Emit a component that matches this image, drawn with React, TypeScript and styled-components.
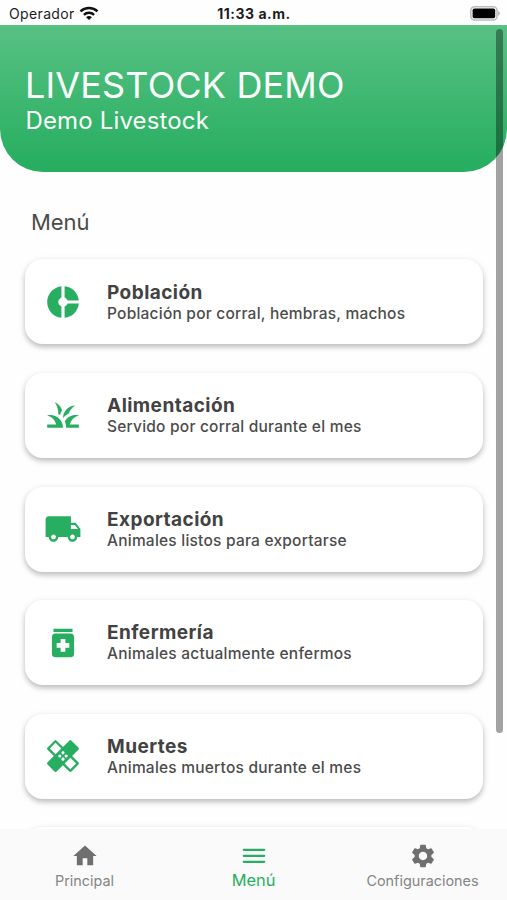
import React from "react";
import styled, { createGlobalStyle, css } from "styled-components";
import type { IconType } from "react-icons";
import {
  MdDonutSmall,
  MdGrass,
  MdHealing,
  MdHome,
  MdLocalShipping,
  MdMedication,
  MdSettings,
} from "react-icons/md";

const GlobalStyle = createGlobalStyle`
  * { box-sizing: border-box; }
  body {
    margin: 0;
    background: #fefefe;
    font-family: Inter, Roboto, sans-serif;
  }
  h1, h2, h3, p { margin: 0; font-weight: 400; }
`;

const Screen = styled.div`
  position: relative;
  display: flex;
  flex-direction: column;
  width: 507px;
  height: 900px;
  overflow: hidden;
  background: #fefefe;
`;

const StatusBar = styled.div`
  flex: none;
  display: grid;
  grid-template-columns: 1fr auto 1fr;
  align-items: center;
  height: 25px;
  padding: 3px 7px 0 9px;
  color: #1c1c1e;
  font-size: 14px;
  line-height: 20px;
`;

const Carrier = styled.div`
  display: flex;
  align-items: center;
  gap: 4px;
  letter-spacing: 0.36px;

  svg { margin-bottom: 2px; }
`;

const Clock = styled.div`
  margin-right: 1px;
  font-weight: 700;
  letter-spacing: 0.5px;
`;

const BatterySlot = styled.div`
  display: flex;
  justify-content: flex-end;
  padding-bottom: 2px;
`;

const Header = styled.header`
  flex: none;
  height: 147px;
  padding: 37px 26px 0;
  color: #fafffb;
  background: linear-gradient(180deg, #58c184 0%, #27ae60 96%);
  border-radius: 0 0 43px 43px;
`;

const Title = styled.h1`
  margin-left: -1px;
  font-size: 36px;
  line-height: 46px;
  letter-spacing: 0.15px;
`;

const Subtitle = styled.p`
  margin-top: -1px;
  margin-left: -0.5px;
  font-size: 24px;
  line-height: 28px;
  letter-spacing: 0.15px;
`;

const Content = styled.main`
  flex: 1;
  min-height: 0;
  overflow: hidden;
  padding: 34px 25px 0;
`;

const SectionTitle = styled.h2`
  height: 53.4px;
  padding-left: 6px;
  color: #4b4b4b;
  font-size: 22px;
  line-height: 32px;
  letter-spacing: -0.1px;
`;

const CardList = styled.div`
  display: flex;
  flex-direction: column;
  gap: 28.6px;
`;

const Card = styled.article`
  flex: none;
  display: flex;
  align-items: center;
  gap: 25px;
  width: 458px;
  height: 85px;
  padding: 0 20px 0 19px;
  border-radius: 18px;
  background: #fff;
  box-shadow: 0 3px 5px rgba(0, 0, 0, 0.2), 0 2px 8px rgba(0, 0, 0, 0.09);
`;

const CardIcon = styled.div`
  display: flex;
  color: #27ae60;
`;

const CardCopy = styled.div`
  padding-top: 1.4px;
`;

const CardTitle = styled.h3`
  color: #424242;
  font-size: 19px;
  font-weight: 650;
  line-height: 21px;
  letter-spacing: 0.45px;
`;

const CardText = styled.p`
  color: #4c4c4c;
  font-size: 15.5px;
  font-weight: 450;
  line-height: 21px;
  letter-spacing: 0.22px;
`;

const TabBar = styled.nav`
  flex: none;
  display: grid;
  grid-template-columns: repeat(3, 1fr);
  height: 71px;
  background: #fafafa;
`;

const Tab = styled.div<{ $active?: boolean }>`
  display: flex;
  flex-direction: column;
  align-items: center;
  padding-top: 13px;
  color: #6f6f6f;
  ${(p) => p.$active && css`color: #27ae60;`}
`;

const TabLabel = styled.span<{ $active?: boolean }>`
  color: ${(p) => (p.$active ? "#27ae60" : "#858585")};
  font-size: ${(p) => (p.$active ? "16.4px" : "14.4px")};
  line-height: ${(p) => (p.$active ? "20px" : "22px")};
  white-space: nowrap;
`;

const ScrollThumb = styled.div`
  position: absolute;
  top: 29px;
  right: 4px;
  width: 7px;
  height: 704px;
  border-radius: 4px;
  background: rgba(0, 0, 0, 0.36);
`;

const WifiIcon = () => (
  <svg width="20" height="15" viewBox="0 0 20 15" fill="none" stroke="#111" strokeWidth="2.5">
    <path d="M1.5 5.4C6.2.9 13.8.9 18.5 5.4" />
    <path d="M4.9 8.8C7.7 6.1 12.3 6.1 15.1 8.8" />
    <path d="M10 14.1 7.1 11.2C8.7 9.7 11.3 9.7 12.9 11.2Z" fill="#111" stroke="none" />
  </svg>
);

const BatteryIcon = () => (
  <svg width="30" height="15" viewBox="0 0 30 15">
    <rect x="0.8" y="0.8" width="26.2" height="13.2" rx="3.8" fill="#fff" stroke="#bcbcbc" strokeWidth="1.6" />
    <rect x="2.6" y="2.6" width="22.6" height="9.6" rx="1.7" fill="#000" />
    <path d="M28.2 5.1C30.2 6 30.2 8.8 28.2 9.7Z" fill="#aaa" />
  </svg>
);

const MenuIcon = ({ size = 28 }: { size?: number | string }) => (
  <svg width={size} height={size} viewBox="0 0 28 28" fill="none" stroke="currentColor" strokeWidth="2.3" strokeLinecap="round">
    <path d="M3.8 7.8H24.2M3.8 13.8H24.2M3.8 19.8H24.2" />
  </svg>
);

const entries: { icon: IconType; title: string; text: string }[] = [
  { icon: MdDonutSmall, title: "Población", text: "Población por corral, hembras, machos" },
  { icon: MdGrass, title: "Alimentación", text: "Servido por corral durante el mes" },
  { icon: MdLocalShipping, title: "Exportación", text: "Animales listos para exportarse" },
  { icon: MdMedication, title: "Enfermería", text: "Animales actualmente enfermos" },
  { icon: MdHealing, title: "Muertes", text: "Animales muertos durante el mes" },
];

const tabs: { icon: IconType | typeof MenuIcon; label: string; active?: boolean }[] = [
  { icon: MdHome, label: "Principal" },
  { icon: MenuIcon, label: "Menú", active: true },
  { icon: MdSettings, label: "Configuraciones" },
];

export default function App() {
  return (
    <>
      <GlobalStyle />
      <Screen>
        <StatusBar>
          <Carrier>
            Operador
            <WifiIcon />
          </Carrier>
          <Clock>11:33 a.m.</Clock>
          <BatterySlot>
            <BatteryIcon />
          </BatterySlot>
        </StatusBar>
        <Header>
          <Title>LIVESTOCK DEMO</Title>
          <Subtitle>Demo Livestock</Subtitle>
        </Header>
        <Content>
          <SectionTitle>Menú</SectionTitle>
          <CardList>
            {entries.map(({ icon: Icon, title, text }) => (
              <Card key={title}>
                <CardIcon>
                  <Icon size={38} />
                </CardIcon>
                <CardCopy>
                  <CardTitle>{title}</CardTitle>
                  <CardText>{text}</CardText>
                </CardCopy>
              </Card>
            ))}
            <Card />
          </CardList>
        </Content>
        <TabBar>
          {tabs.map(({ icon: Icon, label, active }) => (
            <Tab key={label} $active={active}>
              <Icon size={28} />
              <TabLabel $active={active}>{label}</TabLabel>
            </Tab>
          ))}
        </TabBar>
        <ScrollThumb />
      </Screen>
    </>
  );
}
